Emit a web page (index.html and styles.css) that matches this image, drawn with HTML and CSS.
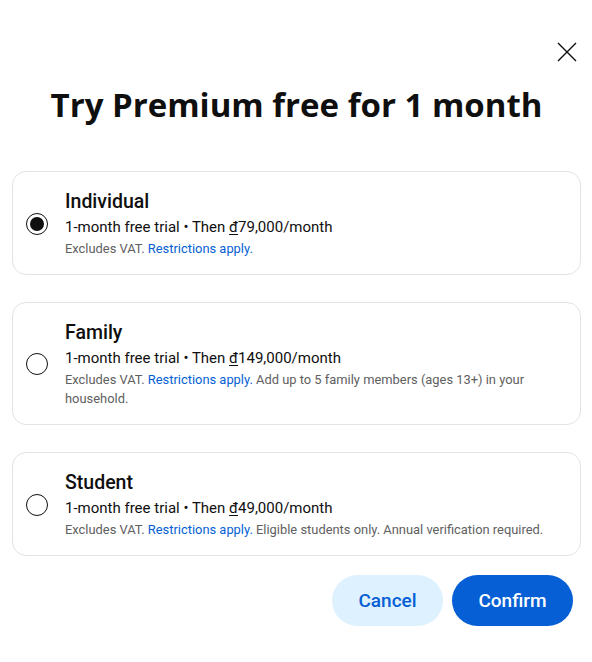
FILE: index.html
```html
<!DOCTYPE html>
<html>
<head>
<meta charset="utf-8">
<link rel="stylesheet" href="styles.css">
</head>
<body>
<div class="dialog">
  <div class="top">
    <button class="close" aria-label="Close">
      <svg width="22" height="22" viewBox="0 0 22 22"><path d="M2 2L20 20M20 2L2 20" stroke="#0f0f0f" stroke-width="1.4" fill="none"/></svg>
    </button>
  </div>
  <h1 class="title">Try Premium free for 1 month</h1>
  <div class="plans">
    <label class="plan">
      <span class="radio checked"></span>
      <div class="info">
        <div class="name">Individual</div>
        <div class="price">1-month free trial • Then <u>đ</u>79,000/month</div>
        <div class="note">Excludes VAT. <a class="link">Restrictions apply.</a></div>
      </div>
    </label>
    <label class="plan">
      <span class="radio"></span>
      <div class="info">
        <div class="name">Family</div>
        <div class="price">1-month free trial • Then <u>đ</u>149,000/month</div>
        <div class="note">Excludes VAT. <a class="link">Restrictions apply.</a> Add up to 5 family members (ages 13+) in your household.</div>
      </div>
    </label>
    <label class="plan">
      <span class="radio"></span>
      <div class="info">
        <div class="name">Student</div>
        <div class="price">1-month free trial • Then <u>đ</u>49,000/month</div>
        <div class="note">Excludes VAT. <a class="link">Restrictions apply.</a> Eligible students only. Annual verification required.</div>
      </div>
    </label>
  </div>
  <div class="actions">
    <button class="btn cancel">Cancel</button>
    <button class="btn confirm">Confirm</button>
  </div>
</div>
</body>
</html>
```
FILE: styles.css
```css
* { box-sizing: border-box; }
html, body { margin: 0; padding: 0; background: #fff; }
body { font-family: Roboto, "Liberation Sans", sans-serif; color: #0f0f0f; }
.dialog { width: 592px; height: 662px; padding: 0 11px 0 12px; display: flex; flex-direction: column; }
.top { display: flex; justify-content: flex-end; padding-top: 41px; height: 63px; }
.close { background: none; border: 0; padding: 0; width: 22px; height: 22px; margin-right: 3px; cursor: pointer; }
.close svg { display: block; }
.title { margin: 17px 0 0; text-align: center; font-family: "Open Sans", Roboto, sans-serif; font-weight: 700; font-size: 33px; line-height: 50px; letter-spacing: 0; color: #0f0f0f; }
.plans { margin-top: 41px; display: flex; flex-direction: column; gap: 27px; }
.plan { display: flex; align-items: center; border: 1px solid #e3e3e3; border-radius: 14px; padding: 17px 16px 16px 13px; gap: 17px; }
.radio { flex: none; width: 22px; height: 22px; border-radius: 50%; border: 1.6px solid #0f0f0f; display: flex; align-items: center; justify-content: center; }
.radio.checked::after { content: ""; width: 14px; height: 14px; border-radius: 50%; background: #0f0f0f; }
.info { display: flex; flex-direction: column; }
.name { font-size: 19.5px; font-weight: 500; line-height: 26px; }
.price { font-size: 15px; line-height: 24px; margin-top: 0; }
.price u { text-decoration-thickness: 1px; text-underline-offset: 2px; }
.note { font-size: 12.9px; line-height: 19px; color: #606060; }
.link { color: #065fd4; text-decoration: none; }
.actions { display: flex; justify-content: flex-end; gap: 9px; margin-top: 19px; padding-right: 8px; }
.btn { border: 0; border-radius: 26px; height: 51px; font-family: Roboto, sans-serif; font-size: 19px; font-weight: 500; padding: 0; cursor: pointer; }
.cancel { width: 111px; background: #def1ff; color: #065fd4; }
.confirm { width: 121px; background: #065fd4; color: #fff; }
```
